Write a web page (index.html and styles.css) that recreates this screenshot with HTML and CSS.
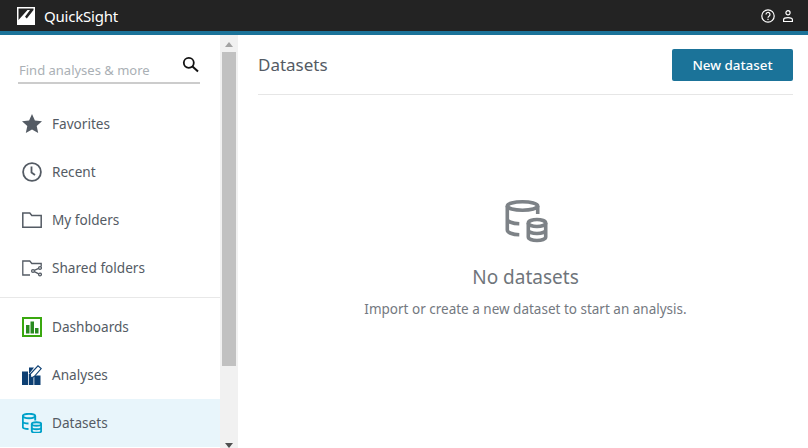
FILE: index.html
```html
<!DOCTYPE html>
<html lang="en">
<head>
<meta charset="utf-8">
<title>QuickSight</title>
<link rel="stylesheet" href="styles.css">
</head>
<body>
<header class="topbar">
  <div class="brand">
    <svg class="logo" width="18" height="18" viewBox="0 0 18 18"><path fill="#fff" d="M0 0h18v18H0z"/><path fill="#232323" d="M1.500 1.500h15V3L9.800 11.500 8 9.700 13 3h-2.500L1.500 13z"/></svg>
    <span class="brand-name">QuickSight</span>
  </div>
  <div class="top-icons">
    <svg width="14" height="14" viewBox="0 0 14 14" fill="none" stroke="#fff" stroke-width="1.200"><circle cx="7" cy="7" r="6.200"/><path d="M5 5.500a2 2 0 1 1 3 1.700c-.7.400-1 .8-1 1.500"/><path d="M7 9.800v1.200"/></svg>
    <svg width="10" height="12" viewBox="0 0 10 12" fill="none" stroke="#fff" stroke-width="1.200"><circle cx="5" cy="2.800" r="2.100"/><path d="M.6 11.500V9.700C.6 8.300 2 7.600 5 7.600s4.400.7 4.400 2.100v1.800z"/></svg>
  </div>
</header>
<div class="layout">
  <aside class="sidebar">
    <div class="search">
      <span class="search-text">Find analyses &amp; more</span>
      <svg class="search-icon" width="17" height="17" viewBox="0 0 17 17" fill="none" stroke="#111" stroke-width="1.800"><circle cx="6.800" cy="6.800" r="5"/><path d="M10.500 10.500l5.500 5" stroke-width="2"/></svg>
    </div>
    <nav class="nav-group">
      <a class="nav-item"><svg class="nav-icon" width="20" height="20" viewBox="0 0 20 20"><path fill="#545b64" d="M10 0l2.900 6.500 7.100.8-5.300 4.700 1.500 7-6.200-3.600L3.800 19l1.500-7L0 7.300l7.100-.8z"/></svg><span>Favorites</span></a>
      <a class="nav-item"><svg class="nav-icon" width="20" height="20" viewBox="0 0 20 20" fill="none" stroke="#545b64" stroke-width="1.800"><circle cx="10" cy="10" r="8.900"/><path d="M9.500 4.500v6l3.500 2.500"/></svg><span>Recent</span></a>
      <a class="nav-item"><svg class="nav-icon" width="20" height="20" viewBox="0 0 20 20" fill="none" stroke="#545b64" stroke-width="1.500"><path d="M.8 3h7l2 2.500h9.400v11.700H.8z"/></svg><span>My folders</span></a>
      <a class="nav-item"><svg class="nav-icon" width="20" height="20" viewBox="0 0 20 20" fill="none" stroke="#545b64" stroke-width="1.300"><path d="M8 17H.8V3h7l2 2.500h9.400v3"/><circle cx="18" cy="10" r="1.400"/><circle cx="18" cy="16.500" r="1.400"/><circle cx="11" cy="13" r="1.400"/><path d="M12.300 12.400l4.400-2M12.300 13.700l4.400 2.200"/></svg><span>Shared folders</span></a>
    </nav>
    <nav class="nav-group nav-group-lower">
      <a class="nav-item"><svg class="nav-icon" width="20" height="20" viewBox="0 0 20 20"><path fill="none" stroke="#3aa80f" stroke-width="2" d="M1 1h18v18H1z"/><path fill="#2a8a20" d="M4 8h3.500v8.500H4zM8.500 4.500H12v12H8.500zM13 11h3.500v5.500H13z"/></svg><span>Dashboards</span></a>
      <a class="nav-item"><svg class="nav-icon" width="20" height="20" viewBox="0 0 20 20"><path fill="#0d3f73" d="M0 6.500h6V20H0zM6.800 9h4.700v11H6.800zM12.300 10.500H18.500V20h-6.200zM7 2.500h5L7 9z"/><path fill="#fff" stroke="#0d3f73" stroke-width="1.100" d="M9 13l-.7-4L16 .8l3.200 2.700-7 8z"/></svg><span>Analyses</span></a>
      <a class="nav-item is-active"><svg class="nav-icon" width="20" height="20" viewBox="0 0 20 20" fill="none" stroke="#00a1c9" stroke-width="1.900"><ellipse cx="7" cy="3" rx="6.200" ry="2.200"/><path d="M.8 3v11c0 1.200 2.500 2 5.700 2M13.200 3v4.500M.8 8.500c0 1.200 2.500 2 5.700 2"/><ellipse cx="14.500" cy="11" rx="4.700" ry="1.800"/><path d="M9.800 11v7c0 1 2 1.800 4.700 1.800s4.700-.8 4.700-1.800v-7M9.800 14.500c0 1 2 1.800 4.700 1.800s4.700-.8 4.700-1.800"/></svg><span>Datasets</span></a>
    </nav>
  </aside>
  <div class="scrollbar">
    <span class="arrow arrow-up"></span>
    <span class="thumb"></span>
    <span class="arrow arrow-down"></span>
  </div>
  <main class="content">
    <div class="page-head">
      <h1 class="page-title">Datasets</h1>
      <button class="primary-btn" type="button">New dataset</button>
    </div>
    <section class="empty">
      <svg class="empty-icon" width="46" height="46" viewBox="0 0 46 46" fill="none" stroke="#7d8287" stroke-width="3.600"><ellipse cx="19.500" cy="8" rx="15.200" ry="4.200"/><path d="M4.300 8v24c0 2.500 5 4.500 12 4.700M34.700 8v8M4.300 21c0 2.500 5 4.500 12 4.700"/><ellipse cx="34" cy="25" rx="8.700" ry="3.500"/><path d="M25.300 25v14c0 2 3.800 3.500 8.700 3.500s8.700-1.500 8.700-3.500V25M25.300 32c0 2 3.800 3.500 8.700 3.500s8.700-1.500 8.700-3.500"/></svg>
      <h2 class="empty-title">No datasets</h2>
      <p class="empty-text">Import or create a new dataset to start an analysis.</p>
    </section>
  </main>
</div>
</body>
</html>
```

FILE: styles.css
```css
* { box-sizing: border-box; }
html, body { margin: 0; height: 100%; overflow: hidden; }
body { font-family: "Noto Sans", "Open Sans", sans-serif; color: #545b64; background: #fff; }

.topbar {
  height: 35px;
  background: #232323;
  border-bottom: 4px solid #1b7399;
  display: flex;
  align-items: center;
  justify-content: space-between;
  padding: 0 15px 0 17px;
}
.brand { display: flex; align-items: center; gap: 9px; }
.brand-name { color: #fff; font-size: 15px; letter-spacing: -0.2px; }
.logo { display: block; }
.top-icons { display: flex; align-items: center; gap: 8px; }
.top-icons svg { display: block; }

.layout { display: flex; height: 413px; }
.sidebar { width: 220px; flex: none; display: flex; flex-direction: column; overflow: hidden; }

.search {
  height: 49px;
  margin: 0 20px 16px 18px;
  border-bottom: 2px solid #ccc;
  display: flex;
  align-items: flex-end;
  justify-content: space-between;
  padding: 0 1px 3px 1px;
}
.search-text { font-size: 13px; color: #aab0b5; line-height: 18px; }
.search-icon { margin-bottom: 6px; flex: none; }

.nav-group { display: flex; flex-direction: column; }
.nav-group-lower { border-top: 1px solid #e8e8e8; margin-top: 5px; padding-top: 5px; }
.nav-item { height: 48px; display: flex; align-items: center; gap: 10px; padding-left: 22px; font-size: 13.6px; color: #545b64; }
.nav-item span { padding-bottom: 2px; }
.nav-icon { display: block; flex: none; }
.is-active { background: #e8f5fb; }

.scrollbar {
  width: 18px;
  flex: none;
  background: #f1f1f1;
  display: flex;
  flex-direction: column;
  align-items: center;
}
.arrow { width: 0; height: 0; border-left: 4px solid transparent; border-right: 4px solid transparent; flex: none; }
.arrow-up { border-bottom: 5px solid #a3a3a3; margin-top: 7px; margin-bottom: 5px; }
.arrow-down { border-top: 5px solid #505050; margin-top: auto; margin-bottom: 0; }
.thumb { width: 14px; height: 314px; background: #c1c1c1; flex: none; }

.content { flex: 1; min-width: 0; padding: 0 15px 0 20px; display: flex; flex-direction: column; }
.page-head {
  height: 60px;
  border-bottom: 1px solid #e6e6e6;
  display: flex;
  align-items: center;
  justify-content: space-between;
}
.page-title { margin: 0; font-size: 17px; font-weight: 400; color: #545b64; }
.primary-btn {
  width: 121px;
  height: 32px;
  border: 0;
  border-radius: 2px;
  background: #1b7399;
  color: #fff;
  font-family: inherit;
  font-size: 13.4px;
  font-weight: 500;
  padding: 0;
}

.empty { display: flex; flex-direction: column; align-items: center; padding-top: 103px; }
.empty-icon { display: block; }
.empty-title { margin: 20px 0 0; font-size: 19px; line-height: 26px; font-weight: 400; color: #6f757b; }
.empty-text { margin: 9px 0 0; font-size: 13.5px; line-height: 20px; color: #74797f; }
```
